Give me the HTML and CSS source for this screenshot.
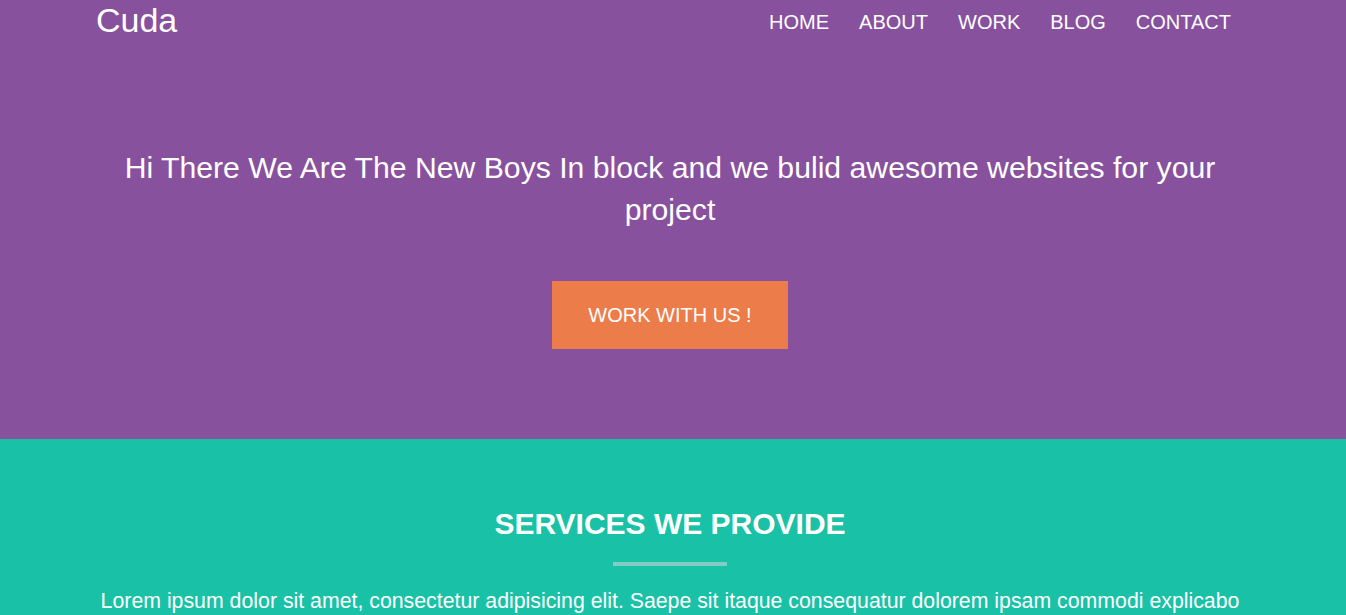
FILE: index.html
```html
<!DOCTYPE html>
<html lang="en">
<head>
<meta charset="utf-8">
<title>Cuda</title>
<link rel="stylesheet" href="styles.css">
</head>
<body>
<header class="hero">
  <div class="topbar">
    <a class="logo" href="#">Cuda</a>
    <nav class="nav">
      <a href="#">HOME</a>
      <a href="#">ABOUT</a>
      <a href="#">WORK</a>
      <a href="#">BLOG</a>
      <a href="#">CONTACT</a>
    </nav>
  </div>
  <div class="hero-body">
    <p class="hero-text">Hi There We Are The New Boys In block and we bulid awesome websites for your project</p>
    <a class="btn" href="#">WORK WITH US !</a>
  </div>
</header>
<section class="services">
  <h2 class="services-title">SERVICES WE PROVIDE</h2>
  <div class="divider"></div>
  <p class="services-text">Lorem ipsum dolor sit amet, consectetur adipisicing elit. Saepe sit itaque consequatur dolorem ipsam commodi explicabo quae, voluptatibus, officia, perspiciatis minima at similique labore distinctio nobis delectus debitis illum ut.</p>
</section>
</body>
</html>
```

FILE: styles.css
```css
* { box-sizing: border-box; }
html, body { margin: 0; padding: 0; }
body {
  font-family: "Liberation Sans", Arial, Helvetica, sans-serif;
  color: #fff;
}
a { color: #fff; text-decoration: none; }

.hero {
  background: #87519e;
  padding-bottom: 90px;
}
.topbar {
  width: 1154px;
  margin: 0 auto;
  display: flex;
  justify-content: space-between;
  align-items: flex-start;
  height: 44px;
}
.logo {
  font-size: 34px;
  line-height: 40px;
}
.nav {
  display: flex;
  gap: 30px;
  padding-right: 19px;
  padding-top: 1px;
}
.nav a {
  font-size: 20px;
  line-height: 43px;
}
.hero-body {
  width: 1146px;
  margin: 0 auto;
  padding: 103px 6px 0 0;
  text-align: center;
}
.hero-text {
  margin: 0;
  font-size: 30.2px;
  line-height: 42px;
}
.btn {
  display: inline-block;
  margin-top: 50px;
  background: #ec7c4a;
  font-size: 20px;
  line-height: 24px;
  padding: 22px 36px;
}
.services {
  background: #19c2a6;
  padding: 67px 6px 40px 0;
  text-align: center;
}
.services-title {
  margin: 0;
  font-size: 30px;
  line-height: 36px;
  font-weight: bold;
}
.divider {
  width: 114px;
  height: 4px;
  margin: 20px auto 0;
  background: #82ccc6;
}
.services-text {
  width: 1160px;
  margin: 20px auto 0;
  font-size: 21.3px;
  line-height: 30px;
}
```
